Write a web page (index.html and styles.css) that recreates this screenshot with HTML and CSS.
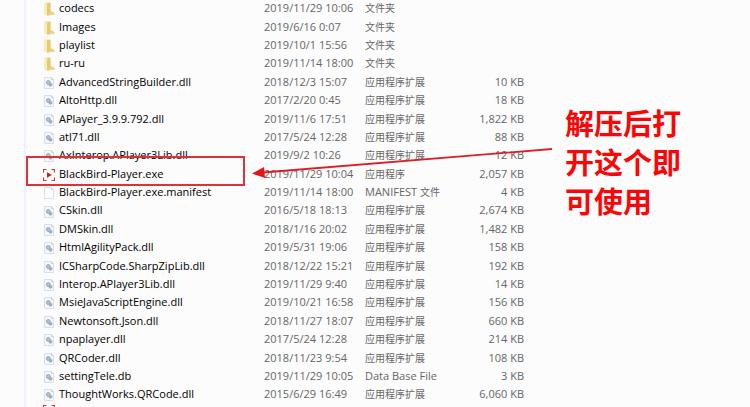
FILE: index.html
```
<!DOCTYPE html>
<html lang="zh-CN">
<head>
<meta charset="utf-8">
<title>BlackBird-Player</title>
<link rel="stylesheet" href="styles.css">
</head>
<body>
<svg class="defs" aria-hidden="true">
  <defs>
    <symbol id="folder" viewBox="0 0 12 14">
      <path d="M1 1 2 .5h5.500V9l4 2v1.500L5 13.500 1 12z" fill="#f1dd93"/>
      <path d="M1 1l3 .5v12l-3-1.500z" fill="#f9eeb9"/>
      <path d="M4 2 7.500.5v10.500L5 13.500H4z" fill="#e5ca72"/>
      <path d="M7.500 9l4 2v1.500L5 13.500z" fill="#ead389"/>
    </symbol>
    <symbol id="dll" viewBox="0 0 12 14">
      <path d="M1.500 1.500h7l2 2v9h-9z" fill="#f5f8fa" stroke="#d9dfe5"/>
      <path d="M8.500 1.500v2h2" fill="none" stroke="#cbd2d9"/>
      <circle cx="5.300" cy="6.500" r="1.900" fill="#b5c6d6" stroke="#8fa3b6"/>
      <circle cx="7.500" cy="8.700" r="1.500" fill="#9db1c4" stroke="#93a7b9" stroke-width=".8"/>
    </symbol>
    <symbol id="page" viewBox="0 0 12 14">
      <path d="M1.500 1.500h7l2 2v9h-9z" fill="#fdfdfd" stroke="#dcdfe2"/>
      <path d="M8.500 1.500v2h2" fill="none" stroke="#d3d6da"/>
    </symbol>
    <symbol id="player" viewBox="0 0 12 14">
      <path d="M3.500 1.500h-3v3M8.500 1.500h3v3M3.500 12.500h-3v-3M8.500 12.500h3v-3" fill="none" stroke="#d8353a" stroke-width="1.200"/>
      <path d="M4 4.300 8.800 7 4 9.700z" fill="#cf1720"/>
    </symbol>
  </defs>
</svg>
<main class="explorer">
  <div class="nav-edge"></div>
  <table class="files">
    <colgroup><col class="c-name"><col class="c-date"><col class="c-type"><col class="c-size"></colgroup>
    <tbody>
    <tr><td class="name"><svg class="icon"><use href="#folder"/></svg>codecs</td><td>2019/11/29 10:06</td><td><span class="zh">文件夹</span></td><td class="size"></td></tr>
    <tr><td class="name"><svg class="icon"><use href="#folder"/></svg>Images</td><td>2019/6/16 0:07</td><td><span class="zh">文件夹</span></td><td class="size"></td></tr>
    <tr><td class="name"><svg class="icon"><use href="#folder"/></svg>playlist</td><td>2019/10/1 15:56</td><td><span class="zh">文件夹</span></td><td class="size"></td></tr>
    <tr><td class="name"><svg class="icon"><use href="#folder"/></svg>ru-ru</td><td>2019/11/14 18:00</td><td><span class="zh">文件夹</span></td><td class="size"></td></tr>
    <tr><td class="name"><svg class="icon"><use href="#dll"/></svg>AdvancedStringBuilder.dll</td><td>2018/12/3 15:07</td><td><span class="zh">应用程序扩展</span></td><td class="size">10 KB</td></tr>
    <tr><td class="name"><svg class="icon"><use href="#dll"/></svg>AltoHttp.dll</td><td>2017/2/20 0:45</td><td><span class="zh">应用程序扩展</span></td><td class="size">18 KB</td></tr>
    <tr><td class="name"><svg class="icon"><use href="#dll"/></svg>APlayer_3.9.9.792.dll</td><td>2019/11/6 17:51</td><td><span class="zh">应用程序扩展</span></td><td class="size">1,822 KB</td></tr>
    <tr><td class="name"><svg class="icon"><use href="#dll"/></svg>atl71.dll</td><td>2017/5/24 12:28</td><td><span class="zh">应用程序扩展</span></td><td class="size">88 KB</td></tr>
    <tr><td class="name"><svg class="icon"><use href="#dll"/></svg>AxInterop.APlayer3Lib.dll</td><td>2019/9/2 10:26</td><td><span class="zh">应用程序扩展</span></td><td class="size">12 KB</td></tr>
    <tr><td class="name"><svg class="icon"><use href="#player"/></svg>BlackBird-Player.exe</td><td>2019/11/29 10:04</td><td><span class="zh">应用程序</span></td><td class="size">2,057 KB</td></tr>
    <tr><td class="name"><svg class="icon"><use href="#page"/></svg>BlackBird-Player.exe.manifest</td><td>2019/11/14 18:00</td><td>MANIFEST <span class="zh">文件</span></td><td class="size">4 KB</td></tr>
    <tr><td class="name"><svg class="icon"><use href="#dll"/></svg>CSkin.dll</td><td>2016/5/18 18:13</td><td><span class="zh">应用程序扩展</span></td><td class="size">2,674 KB</td></tr>
    <tr><td class="name"><svg class="icon"><use href="#dll"/></svg>DMSkin.dll</td><td>2018/1/16 20:02</td><td><span class="zh">应用程序扩展</span></td><td class="size">1,482 KB</td></tr>
    <tr><td class="name"><svg class="icon"><use href="#dll"/></svg>HtmlAgilityPack.dll</td><td>2019/5/31 19:06</td><td><span class="zh">应用程序扩展</span></td><td class="size">158 KB</td></tr>
    <tr><td class="name"><svg class="icon"><use href="#dll"/></svg>ICSharpCode.SharpZipLib.dll</td><td>2018/12/22 15:21</td><td><span class="zh">应用程序扩展</span></td><td class="size">192 KB</td></tr>
    <tr><td class="name"><svg class="icon"><use href="#dll"/></svg>Interop.APlayer3Lib.dll</td><td>2019/11/29 9:40</td><td><span class="zh">应用程序扩展</span></td><td class="size">14 KB</td></tr>
    <tr><td class="name"><svg class="icon"><use href="#dll"/></svg>MsieJavaScriptEngine.dll</td><td>2019/10/21 16:58</td><td><span class="zh">应用程序扩展</span></td><td class="size">156 KB</td></tr>
    <tr><td class="name"><svg class="icon"><use href="#dll"/></svg>Newtonsoft.Json.dll</td><td>2018/11/27 18:07</td><td><span class="zh">应用程序扩展</span></td><td class="size">660 KB</td></tr>
    <tr><td class="name"><svg class="icon"><use href="#dll"/></svg>npaplayer.dll</td><td>2017/5/24 12:28</td><td><span class="zh">应用程序扩展</span></td><td class="size">214 KB</td></tr>
    <tr><td class="name"><svg class="icon"><use href="#dll"/></svg>QRCoder.dll</td><td>2018/11/23 9:54</td><td><span class="zh">应用程序扩展</span></td><td class="size">108 KB</td></tr>
    <tr><td class="name"><svg class="icon"><use href="#dll"/></svg>settingTele.db</td><td>2019/11/29 10:05</td><td>Data Base File</td><td class="size">3 KB</td></tr>
    <tr><td class="name"><svg class="icon"><use href="#dll"/></svg>ThoughtWorks.QRCode.dll</td><td>2015/6/29 16:49</td><td><span class="zh">应用程序扩展</span></td><td class="size">6,060 KB</td></tr>
    <tr class="cut"><td class="name"><svg class="icon"><use href="#player"/></svg></td><td></td><td></td><td></td></tr>
    </tbody>
  </table>
  <p class="note">解压后打开这个即可使用</p>
  <div class="highlight"></div>
  <svg class="arrow" viewBox="0 0 302 34" aria-hidden="true">
    <path d="M301 3 12 26.500" stroke="#d9202a" stroke-width="1.800" fill="none"/>
    <path d="M1 27.500 13 21 14 32z" fill="#e8141c"/>
  </svg>
</main>
</body>
</html>
```
FILE: styles.css
```
* {
  box-sizing: border-box;
}

body {
  margin: 0;
  background: #fcfcfc;
  color: #666;
  font: 11px/16px "Open Sans", "Noto Sans CJK SC", sans-serif;
  overflow: hidden;
}

.defs {
  position: absolute;
  width: 0;
  height: 0;
}

.explorer {
  position: relative;
  display: flex;
  align-items: flex-start;
  height: 100vh;
  overflow: hidden;
}

.nav-edge {
  flex: none;
  width: 26px;
  height: 100%;
  border-right: 2px solid #eff2fb;
}

.files {
  flex: none;
  height: calc(100% + 16px);
  margin-top: -1px;
  border-collapse: collapse;
  table-layout: fixed;
  width: 498px;
}

.c-name {
  width: 238px;
}

.c-date {
  width: 101px;
}

.c-type {
  width: 99px;
}

.files td {
  height: 18px;
  padding: 0;
  white-space: nowrap;
  vertical-align: middle;
}

.files .name {
  padding-left: 17px;
  color: #000;
}

.files .cut td {
  vertical-align: top;
}

.cut .icon {
  display: block;
}

.files .size {
  text-align: right;
}

.zh {
  font-size: 10px;
}

.icon {
  width: 12px;
  height: 14px;
  margin-right: 4px;
  vertical-align: middle;
}

.note {
  flex: 0 1 128px;
  margin: 103px 0 0 41px;
  color: #fb0507;
  font: bold 29px/39px "Noto Sans CJK SC", sans-serif;
}

.highlight {
  position: absolute;
  left: 26px;
  top: 156px;
  width: 219px;
  height: 30px;
  border: 2px solid #dc3238;
}

.arrow {
  position: absolute;
  left: 251px;
  top: 146px;
  width: 302px;
  height: 34px;
}
```
